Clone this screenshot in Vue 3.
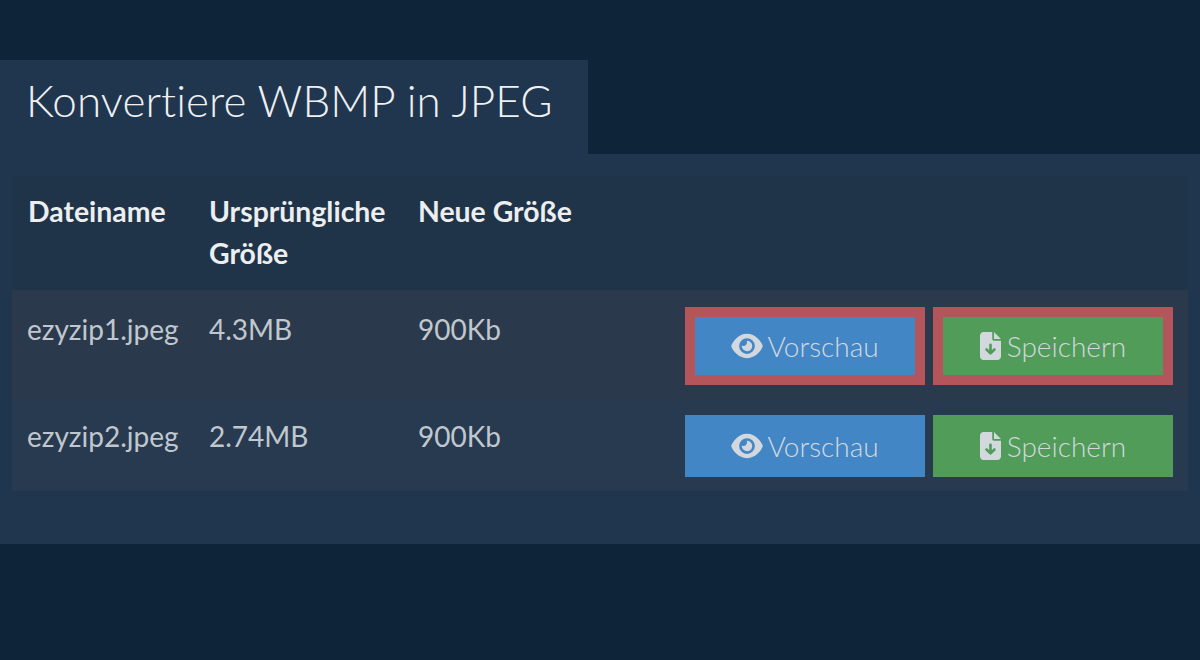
<script setup>
const files = [
  { name: 'ezyzip1.jpeg', size: '4.3MB', newSize: '900Kb', marked: true },
  { name: 'ezyzip2.jpeg', size: '2.74MB', newSize: '900Kb', marked: false },
]
</script>

<template>
  <div class="seite">
    <h1 class="titel">Konvertiere WBMP in JPEG</h1>
    <div class="panel">
      <table class="tabelle">
        <colgroup>
          <col class="spalte-name" />
          <col class="spalte-groesse" />
          <col class="spalte-neu" />
          <col />
        </colgroup>
        <thead>
          <tr>
            <th>Dateiname</th>
            <th>Ursprüngliche Größe</th>
            <th>Neue Größe</th>
            <th></th>
          </tr>
        </thead>
        <tbody>
          <tr v-for="f in files" :key="f.name" :class="{ markiert: f.marked }">
            <td>{{ f.name }}</td>
            <td class="wert">{{ f.size }}</td>
            <td class="wert">{{ f.newSize }}</td>
            <td class="aktionen">
              <div class="knoepfe">
                <button class="knopf blau">
                  <svg class="auge" viewBox="0 0 576 512">
                    <path fill="currentColor" d="M288 32c-80.8 0-145.5 36.8-192.6 80.6C48.6 156 17.3 208 2.5 243.7c-3.3 7.9-3.3 16.7 0 24.6C17.3 304 48.6 356 95.4 399.4C142.5 443.2 207.2 480 288 480s145.5-36.8 192.6-80.6c46.8-43.5 78.1-95.4 93-131.1c3.3-7.9 3.3-16.7 0-24.6c-14.9-35.7-46.2-87.7-93-131.1C433.5 68.8 368.8 32 288 32zM144 256a144 144 0 1 1 288 0 144 144 0 1 1 -288 0zm144-64c0 35.3-28.7 64-64 64c-7.1 0-13.9-1.2-20.3-3.3c-5.5-1.8-11.9 1.6-11.7 7.4c.3 6.9 1.3 13.8 3.2 20.7c13.7 51.2 66.4 81.6 117.6 67.9s81.6-66.4 67.9-117.6c-11.1-41.5-47.8-69.4-88.6-71.1c-5.8-.2-9.2 6.1-7.4 11.7c2.1 6.4 3.3 13.2 3.3 20.3z" />
                  </svg>
                  Vorschau
                </button>
                <button class="knopf gruen">
                  <svg class="datei" viewBox="0 0 384 512">
                    <path fill="currentColor" d="M64 0C28.7 0 0 28.7 0 64V448c0 35.3 28.7 64 64 64H320c35.3 0 64-28.7 64-64V160H256c-17.7 0-32-14.3-32-32V0H64zM256 0V128H384L256 0zM216 232V334.1l31-31c9.4-9.4 24.6-9.4 33.9 0s9.4 24.6 0 33.9l-72 72c-9.4 9.4-24.6 9.4-33.9 0l-72-72c-9.4-9.4-9.4-24.6 0-33.9s24.6-9.4 33.9 0l31 31V232c0-13.3 10.7-24 24-24s24 10.7 24 24z" />
                  </svg>
                  Speichern
                </button>
              </div>
            </td>
          </tr>
        </tbody>
      </table>
    </div>
  </div>
</template>

<style>
html,
body {
  margin: 0;
  background: #0e2439;
}
</style>

<style scoped>
.seite {
  height: 660px;
  padding-top: 60px;
  box-sizing: border-box;
  background: #0e2439;
  font-family: Lato, "Open Sans", sans-serif;
  font-variant-ligatures: none;
  overflow: hidden;
}
.titel {
  width: 588px;
  height: 94px;
  margin: 0;
  padding: 12px 0 0 26px;
  box-sizing: border-box;
  background: #20364e;
  color: #eef0f2;
  font-size: 44px;
  font-weight: 300;
  line-height: 56px;
  letter-spacing: 0.08px;
}
.panel {
  height: 390px;
  padding: 22px 12px 0;
  box-sizing: border-box;
  background: #20364e;
}
.tabelle {
  width: 100%;
  border-collapse: collapse;
  table-layout: fixed;
  font-size: 28px;
  line-height: 42px;
}
.spalte-name {
  width: 181px;
}
.spalte-groesse {
  width: 209px;
}
.spalte-neu {
  width: 267px;
}
thead tr {
  background: #1f3449;
}
th {
  padding: 14px 16px 16px;
  color: #eceef0;
  font-size: 28.4px;
  font-weight: 700;
  text-align: left;
  vertical-align: top;
}
td {
  padding: 18px 15px 0;
  color: #c1c7ce;
  vertical-align: top;
}
td.wert {
  padding-left: 16px;
  padding-right: 14px;
}
tbody tr {
  height: 91px;
  background: #273a50;
}
tbody tr.markiert {
  height: 110px;
  background: #2a3a4c;
}
tbody tr:not(.markiert) td {
  padding-top: 15px;
}
td.aktionen {
  padding: 0 15px 0 0;
}
tbody tr:not(.markiert) td.aktionen {
  padding-top: 15px;
}
tbody tr.markiert td.aktionen {
  padding-top: 17px;
}
.knoepfe {
  display: flex;
  justify-content: flex-end;
  gap: 8px;
}
.knopf {
  display: flex;
  align-items: center;
  justify-content: center;
  gap: 6px;
  width: 240px;
  height: 62px;
  padding: 0;
  border: none;
  box-sizing: border-box;
  color: #d2d8de;
  font-family: inherit;
  font-size: 28px;
  font-weight: 300;
}
.markiert .knopf {
  height: 78px;
  border: 10px solid #b3555a;
}
.blau {
  gap: 4px;
  background: #4286c6;
}
.gruen {
  background: #509c58;
}
.auge {
  width: 32px;
  height: 28px;
}
.datei {
  width: 21px;
  height: 28px;
}
</style>
